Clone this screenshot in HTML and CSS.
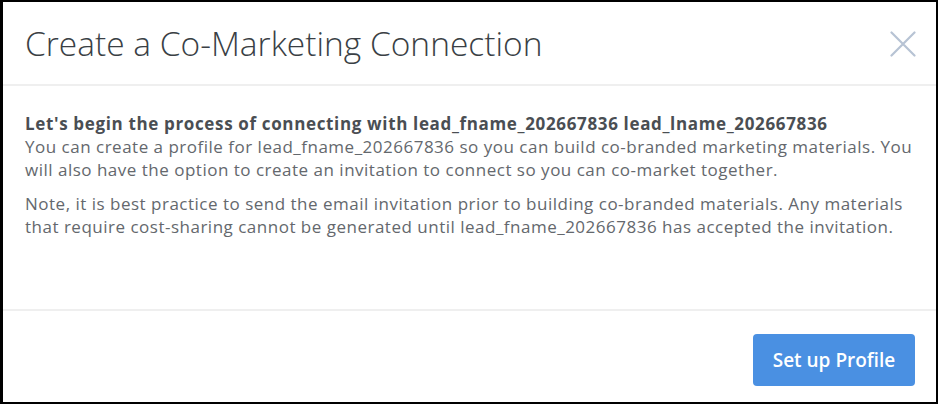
FILE: index.html
```html
<!DOCTYPE html>
<html lang="en">
<head>
<meta charset="utf-8">
<title>Create a Co-Marketing Connection</title>
<link rel="stylesheet" href="styles.css">
</head>
<body>
<div class="modal">
  <header class="modal-header">
    <h1 class="modal-title">Create a Co-Marketing Connection</h1>
    <button class="close-btn" aria-label="Close">
      <svg width="26" height="26" viewBox="0 0 26 26"><path d="M1.5 1.5 L24.5 24.5 M24.5 1.5 L1.5 24.5" stroke="#b7c3d4" stroke-width="2.2" stroke-linecap="round" fill="none"/></svg>
    </button>
  </header>
  <section class="modal-body">
    <p class="lead"><strong>Let's begin the process of connecting with lead_fname_202667836 lead_lname_202667836</strong><br>You can create a profile for lead_fname_202667836 so you can build co-branded marketing materials. You will also have the option to create an invitation to connect so you can co-market together.</p>
    <p>Note, it is best practice to send the email invitation prior to building co-branded materials. Any materials that require cost-sharing cannot be generated until lead_fname_202667836 has accepted the invitation.</p>
  </section>
  <footer class="modal-footer">
    <button class="primary-btn">Set up Profile</button>
  </footer>
</div>
</body>
</html>
```

FILE: styles.css
```css
* { box-sizing: border-box; }
html, body { margin: 0; padding: 0; background: #fff; }
body { font-family: "Open Sans", "Liberation Sans", sans-serif; }

.modal {
  width: 938px;
  height: 404px;
  border: 2px solid #000;
  border-left-width: 3px;
  display: flex;
  flex-direction: column;
  background: #fff;
}

.modal-header {
  height: 84px;
  flex: none;
  display: flex;
  align-items: center;
  justify-content: space-between;
  padding: 0 20px 0 22px;
  border-bottom: 2px solid #efefef;
}

.modal-title {
  margin: 0;
  font-size: 33.5px;
  font-weight: 300;
  color: #3a3f45;
  letter-spacing: 0;
}

.close-btn {
  border: 0;
  background: none;
  padding: 0;
  width: 26px;
  height: 26px;
  margin-top: 2px;
  cursor: pointer;
}
.close-btn svg { display: block; }

.modal-body {
  flex: 1;
  padding: 26px 16px 0 22px;
  color: #64686d;
  font-size: 17px;
  letter-spacing: 0.5px;
  line-height: 23px;
}
.modal-body p { margin: 0 0 11px; }
.modal-body strong { color: #4a4e53; font-weight: 700; letter-spacing: 0.65px; }

.modal-footer {
  flex: none;
  height: 93px;
  border-top: 2px solid #efefef;
  display: flex;
  justify-content: flex-end;
  align-items: flex-start;
  padding: 23px 21px 0 0;
}

.primary-btn {
  width: 162px;
  height: 52px;
  border: 0;
  border-radius: 4px;
  background: #4a90e2;
  color: #fff;
  font-family: inherit;
  font-size: 19px;
  font-weight: 600;
  cursor: pointer;
}
```
